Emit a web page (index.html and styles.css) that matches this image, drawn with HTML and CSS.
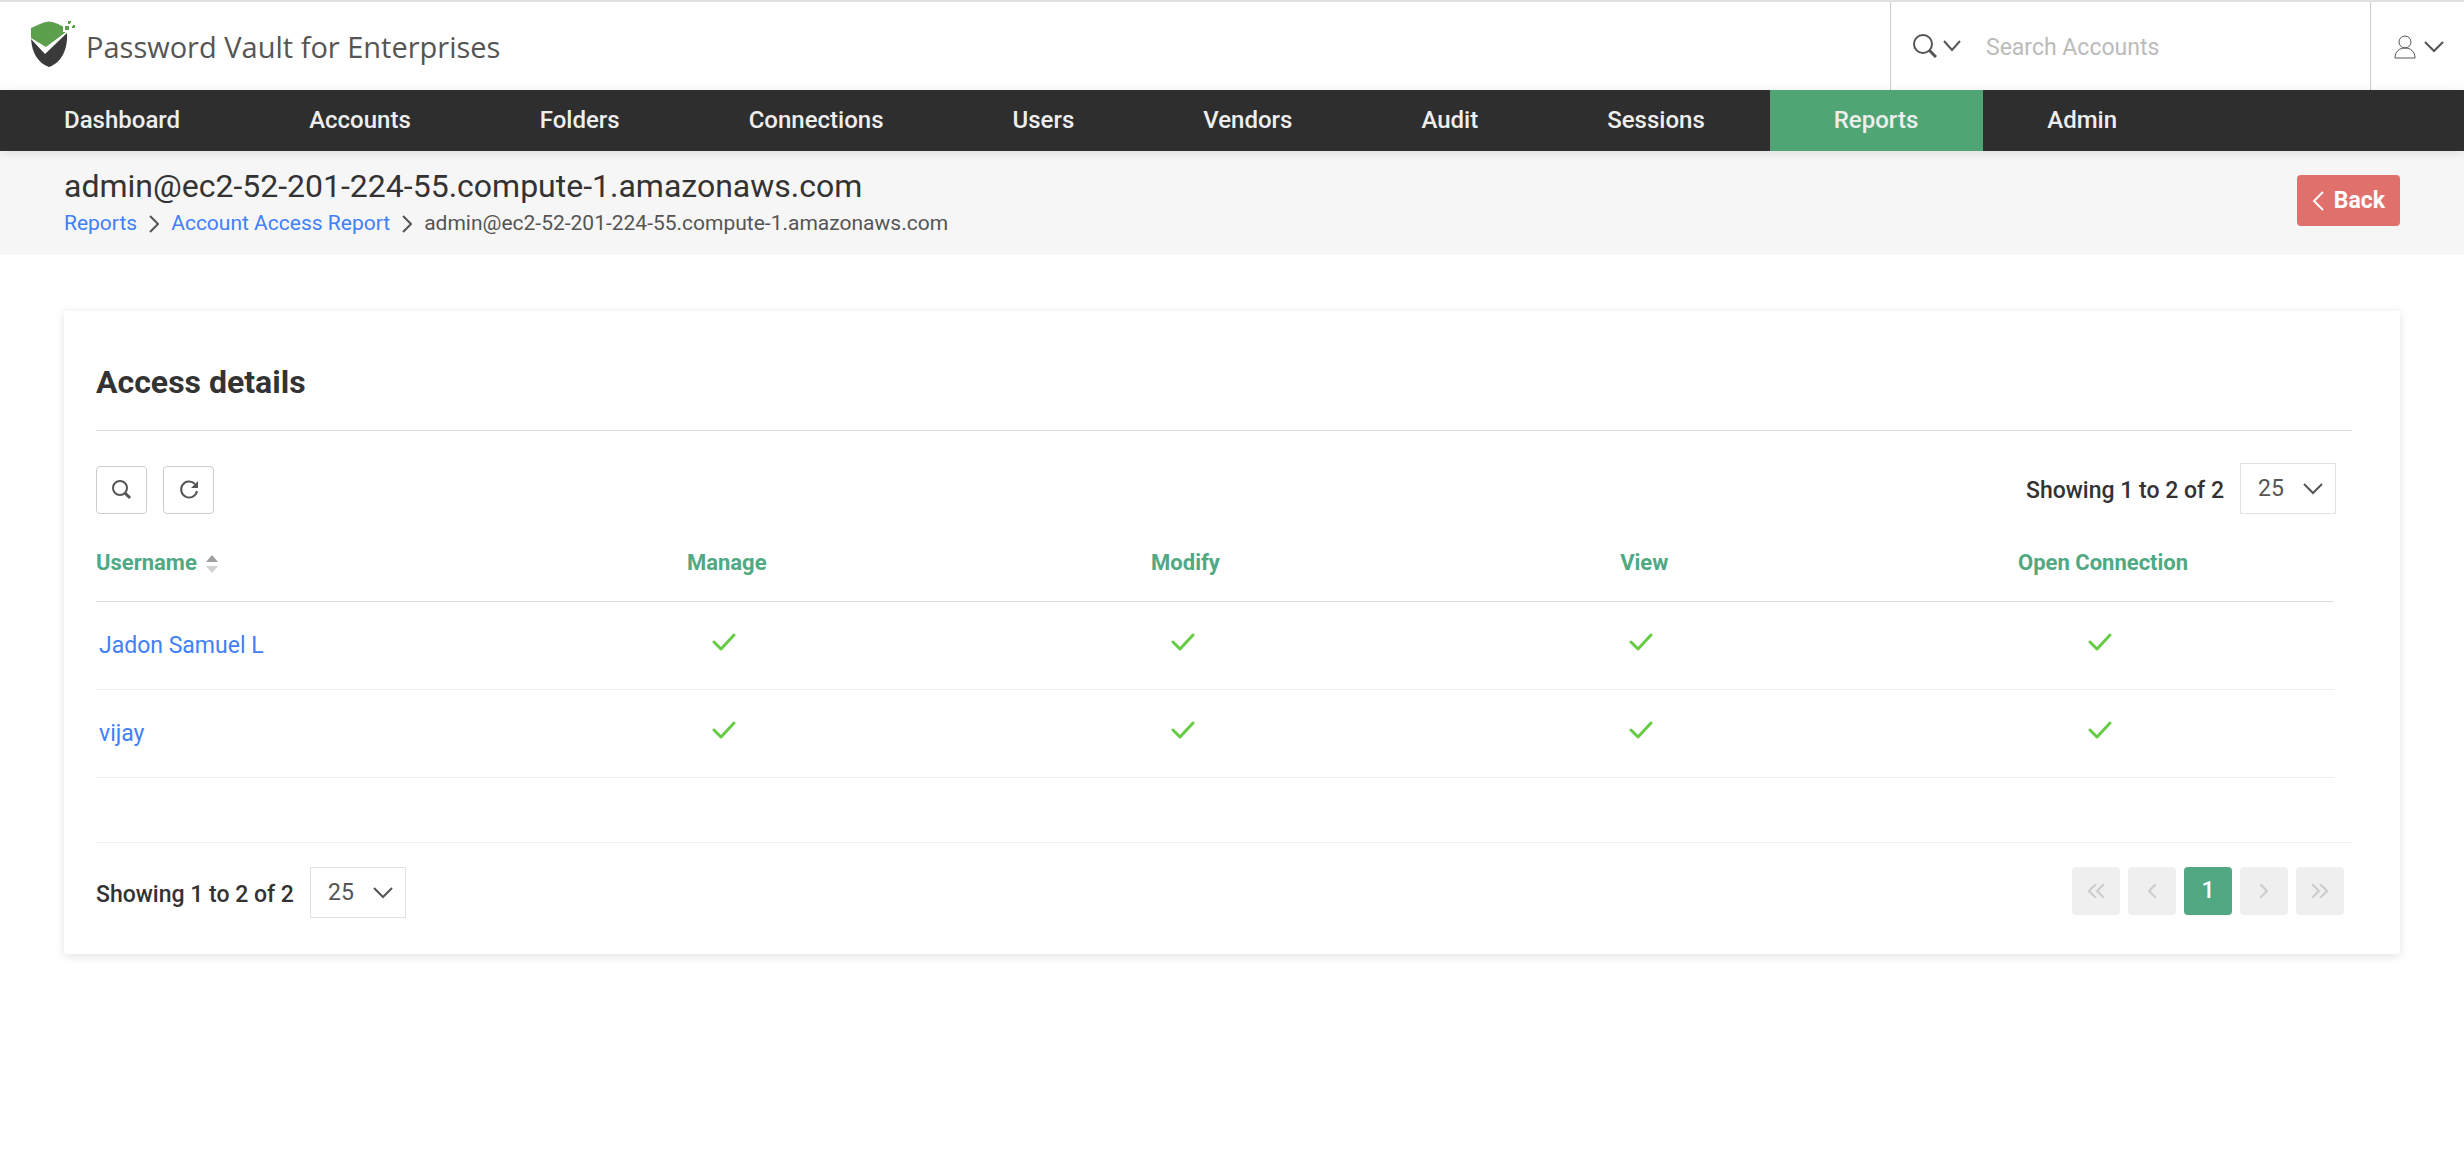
FILE: index.html
```html
<!DOCTYPE html>
<html lang="en">
<head>
    <meta charset="UTF-8">
    <meta name="viewport" content="width=device-width, initial-scale=1.0">
    <title>Account Access Report</title>
    <link rel="stylesheet" href="styles.css">
</head>
<body>
    <header class="topbar">
        <a href="#" class="brand">
            <svg class="logo" viewBox="0 0 46 48" width="46" height="48" aria-hidden="true">
                <path fill="#5c9f4c" d="M1 8 L10 4 Q19 -1 28 4 L36 8 V12 L16 27 L1 18 Z"/>
                <path fill="#3a3a3a" d="M1 19 L15 34 L37 13 C38 30 31 43 19 47 C8 43 2 33 1 19 Z"/>
                <path fill="#5c9f4c" stroke="#fff" d="M34 5h6v6h-6z M37 0h5v5h-5z M41 4h5v5h-5z"/>
            </svg>
            <span>Password Vault for Enterprises</span>
        </a>
        <form class="search">
            <button type="button" class="icon-button" title="Search type">
                <svg width="24" height="24" viewBox="0 0 24 24"><circle cx="10" cy="10" r="9"/><path d="M16 16l7 7" stroke-width="3"/></svg>
                <svg width="18" height="12" viewBox="0 0 18 12"><path d="M1 1l8 9 8-9"/></svg>
            </button>
            <input type="text" placeholder="Search Accounts" aria-label="Search Accounts">
        </form>
        <button type="button" class="icon-button user" title="My account">
            <svg class="person" width="22" height="24" viewBox="0 0 22 24"><ellipse cx="11" cy="7" rx="6" ry="6"/><path d="M1 23c0-6 4-10 10-10s10 4 10 10z"/></svg>
            <svg width="20" height="12" viewBox="0 0 20 12"><path d="M1 1l9 9 9-9"/></svg>
        </button>
    </header>
    <nav class="menu">
        <a href="#">Dashboard</a>
        <a href="#">Accounts</a>
        <a href="#">Folders</a>
        <a href="#">Connections</a>
        <a href="#">Users</a>
        <a href="#">Vendors</a>
        <a href="#">Audit</a>
        <a href="#">Sessions</a>
        <a href="#" class="active">Reports</a>
        <a href="#">Admin</a>
    </nav>
    <div class="page-header">
        <div>
            <h1>admin@ec2-52-201-224-55.compute-1.amazonaws.com</h1>
            <div class="breadcrumb">
                <a href="#">Reports</a>
                <svg width="10" height="18" viewBox="0 0 10 18"><path d="M1 1l8 8-8 8"/></svg>
                <a href="#">Account Access Report</a>
                <svg width="10" height="18" viewBox="0 0 10 18"><path d="M1 1l8 8-8 8"/></svg>
                <span>admin@ec2-52-201-224-55.compute-1.amazonaws.com</span>
            </div>
        </div>
        <button type="button" class="back">
            <svg width="12" height="20" viewBox="0 0 12 20"><path d="M11 1l-9 9 9 9"/></svg>
            Back
        </button>
    </div>
    <main class="card">
        <h2>Access details</h2>
        <div class="toolbar">
            <button type="button" class="tool" title="Search">
                <svg width="20" height="20" viewBox="0 0 20 20"><circle cx="8" cy="8" r="7"/><path d="M13 13l5 5" stroke-width="3"/></svg>
            </button>
            <button type="button" class="tool" title="Refresh">
                <svg width="20" height="20" viewBox="0 0 20 20"><path d="M18 11a8 8 0 1 1-2-7"/><path class="solid" d="M19 1v7h-7z"/></svg>
            </button>
            <div class="paging">
                <label for="rows-top">Showing 1 to 2 of 2</label>
                <div class="select">
                    <select id="rows-top"><option>25</option><option>50</option></select>
                    <svg width="20" height="12" viewBox="0 0 20 12"><path d="M1 1l9 9 9-9"/></svg>
                </div>
            </div>
        </div>
        <table>
            <thead>
                <tr>
                    <th>Username
                        <svg class="sort" width="12" height="18" viewBox="0 0 12 18"><path fill="#a0a0a0" d="M0 7l6-7 6 7z"/><path fill="#d2d2d2" d="M0 11l6 7 6-7z"/></svg>
                    </th>
                    <th>Manage</th>
                    <th>Modify</th>
                    <th>View</th>
                    <th>Open Connection</th>
                </tr>
            </thead>
            <tbody>
                <tr>
                    <td><a href="#">Jadon Samuel L</a></td>
                    <td><svg class="check" width="24" height="18" viewBox="0 0 24 18"><path d="M2 9l7 7 13-14"/></svg></td>
                    <td><svg class="check" width="24" height="18" viewBox="0 0 24 18"><path d="M2 9l7 7 13-14"/></svg></td>
                    <td><svg class="check" width="24" height="18" viewBox="0 0 24 18"><path d="M2 9l7 7 13-14"/></svg></td>
                    <td><svg class="check" width="24" height="18" viewBox="0 0 24 18"><path d="M2 9l7 7 13-14"/></svg></td>
                </tr>
                <tr>
                    <td><a href="#">vijay</a></td>
                    <td><svg class="check" width="24" height="18" viewBox="0 0 24 18"><path d="M2 9l7 7 13-14"/></svg></td>
                    <td><svg class="check" width="24" height="18" viewBox="0 0 24 18"><path d="M2 9l7 7 13-14"/></svg></td>
                    <td><svg class="check" width="24" height="18" viewBox="0 0 24 18"><path d="M2 9l7 7 13-14"/></svg></td>
                    <td><svg class="check" width="24" height="18" viewBox="0 0 24 18"><path d="M2 9l7 7 13-14"/></svg></td>
                </tr>
            </tbody>
        </table>
        <div class="footer">
            <div class="paging">
                <label for="rows-bottom">Showing 1 to 2 of 2</label>
                <div class="select">
                    <select id="rows-bottom"><option>25</option><option>50</option></select>
                    <svg width="20" height="12" viewBox="0 0 20 12"><path d="M1 1l9 9 9-9"/></svg>
                </div>
            </div>
            <div class="pager">
                <button type="button" disabled title="First"><svg width="16" height="14" viewBox="0 0 16 14"><path d="M8 0l-7 7 7 7M16 0l-7 7 7 7"/></svg></button>
                <button type="button" disabled title="Previous"><svg width="8" height="14" viewBox="0 0 8 14"><path d="M8 0l-7 7 7 7"/></svg></button>
                <button type="button" class="current">1</button>
                <button type="button" disabled title="Next"><svg width="8" height="14" viewBox="0 0 8 14"><path d="M0 0l7 7-7 7"/></svg></button>
                <button type="button" disabled title="Last"><svg width="16" height="14" viewBox="0 0 16 14"><path d="M0 0l7 7-7 7M8 0l7 7-7 7"/></svg></button>
            </div>
        </div>
    </main>
</body>
</html>
```
FILE: styles.css
```css
* {
    box-sizing: border-box;
}

body {
    min-height: 100vh;
    margin: 0;
    font-family: Roboto, sans-serif;
    font-size: 23px;
    color: #333;
    background: #fff;
}

button,
input,
select {
    font: inherit;
    color: inherit;
}

button {
    cursor: pointer;
}

a {
    color: #4080f8;
    text-decoration: none;
}

svg {
    fill: none;
    stroke: #555;
    stroke-width: 2;
}

.topbar {
    display: flex;
    height: 90px;
    border-top: 2px solid #e1e1e1;
}

.brand {
    display: flex;
    align-items: center;
    gap: 10px;
    flex: 1;
    padding-left: 30px;
    font-family: "Open Sans", sans-serif;
    font-size: 29px;
    color: #555;
}

.logo {
    stroke: none;
    margin-bottom: 4px;
}

.search {
    display: flex;
    width: 480px;
    border-left: 1px solid #ccc;
}

.search input {
    flex: 1;
    min-width: 0;
    padding: 2px 20px 0 0;
    border: 0;
    outline: 0;
    background: none;
}

.search input::placeholder {
    color: #bbb;
}

.icon-button {
    display: flex;
    align-items: center;
    gap: 6px;
    padding: 0 25px 0 22px;
    border: 0;
    background: none;
}

.user {
    gap: 8px;
    width: 94px;
    padding: 2px 20px 0 23px;
    border-left: 1px solid #ccc;
}

.person {
    stroke-width: 1;
}

.menu {
    display: flex;
    position: relative;
    background: #2e2e2e;
    box-shadow: 0 2px 10px rgba(0, 0, 0, 0.1);
}

.menu a {
    padding: 0 65px 0 64px;
    font-size: 24px;
    font-weight: 500;
    line-height: 61px;
    color: #eee;
}

.menu a.active {
    background: #4fa674;
}

.page-header {
    display: flex;
    justify-content: space-between;
    align-items: flex-start;
    padding: 16px 64px;
    background: #f6f6f6;
}

h1 {
    margin: 0;
    font-size: 32px;
    font-weight: 400;
    line-height: 38px;
}

.breadcrumb {
    display: flex;
    align-items: center;
    gap: 12px;
    padding-top: 3px;
    font-size: 21px;
    line-height: 31px;
    color: #555;
}

.back {
    display: flex;
    align-items: center;
    gap: 10px;
    height: 51px;
    margin-top: 8px;
    padding: 0 15px;
    border: 0;
    border-radius: 4px;
    font-weight: 700;
    color: #fff;
    background: #e0706c;
}

.back svg {
    stroke: #fff;
}

.card {
    margin: 56px 64px 0;
    padding: 50px 48px 36px 32px;
    border-radius: 4px;
    background: #fff;
    box-shadow: 0 2px 10px rgba(0, 0, 0, 0.12);
}

h2 {
    margin: 0;
    padding-bottom: 26px;
    border-bottom: 1px solid #ddd;
    font-size: 32px;
    font-weight: 700;
    line-height: 43px;
}

.toolbar {
    display: flex;
    align-items: flex-end;
    gap: 16px;
    padding: 32px 16px 0 0;
}

.tool {
    display: flex;
    align-items: center;
    justify-content: center;
    width: 51px;
    height: 48px;
    padding: 0;
    border: 1px solid #ccc;
    border-radius: 4px;
    background: #fff;
}

.tool .solid {
    fill: #555;
    stroke: none;
}

.paging {
    display: flex;
    align-items: center;
    gap: 16px;
    font-weight: 500;
}

.paging label {
    padding-top: 4px;
}

.toolbar .paging {
    margin-left: auto;
}

.select {
    position: relative;
}

.select select {
    display: block;
    width: 96px;
    height: 51px;
    padding: 0 17px;
    border: 1px solid #e1e1e1;
    border-radius: 0;
    font-weight: 400;
    color: #555;
    background: #fff;
    appearance: none;
}

.select svg {
    position: absolute;
    top: 20px;
    right: 13px;
    pointer-events: none;
}

table {
    width: calc(100% - 18px);
    table-layout: fixed;
    border-collapse: collapse;
}

th {
    width: 20.5%;
    height: 87px;
    padding: 10px 3px 0 0;
    border-bottom: 1px solid #ddd;
    font-size: 22px;
    font-weight: 700;
    color: #50a982;
}

th:first-child {
    width: 18%;
    text-align: left;
}

td {
    height: 88px;
    padding: 0 9px 4px 0;
    border-bottom: 1px solid #eee;
    text-align: center;
}

td:first-child {
    padding: 0 3px;
    text-align: left;
}

.sort {
    margin-left: 4px;
    stroke: none;
    vertical-align: -3px;
}

.check {
    stroke: #6c4;
    stroke-width: 3;
    stroke-linecap: round;
    stroke-linejoin: round;
}

.footer {
    display: flex;
    justify-content: space-between;
    align-items: flex-start;
    margin-top: 64px;
    padding: 24px 8px 0 0;
    border-top: 1px solid #eee;
}

.pager {
    display: flex;
    gap: 8px;
}

.pager button {
    display: flex;
    align-items: center;
    justify-content: center;
    width: 48px;
    height: 48px;
    padding: 0;
    border: 0;
    border-radius: 4px;
    background: #efefef;
}

.pager svg {
    stroke: #ccc;
}

.pager .current {
    font-weight: 500;
    color: #fff;
    background: #50a982;
}
```
